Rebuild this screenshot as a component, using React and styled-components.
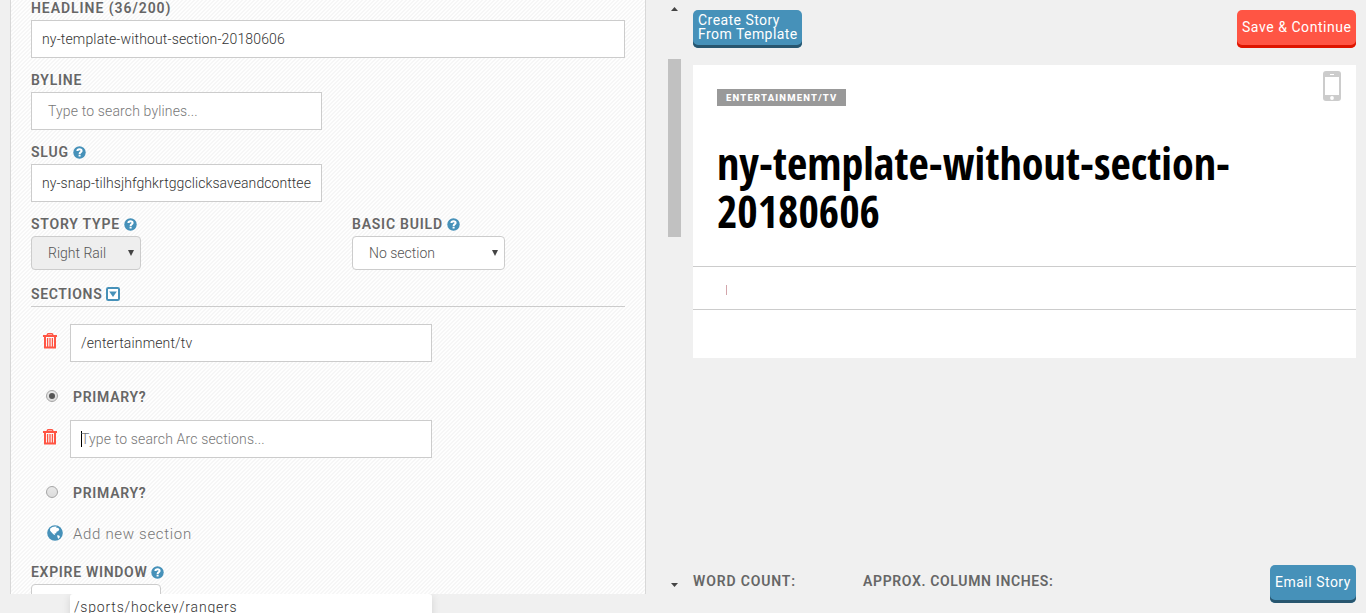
import React from 'react';
import styled, { createGlobalStyle } from 'styled-components';

const GlobalStyle = createGlobalStyle`
  * { box-sizing: border-box; }
  html, body { margin: 0; padding: 0; }
  body {
    background: #f0f0f0;
    color: #666;
    font-family: Roboto, "Liberation Sans", sans-serif;
    font-size: 14px;
    overflow: hidden;
  }
  svg { display: block; flex: none; }
`;

const Page = styled.div`
  position: relative;
  display: flex;
  width: 1366px;
  height: 613px;
  overflow: hidden;
  padding-left: 10px;
`;

const FormPane = styled.section`
  width: 636px;
  height: 594px;
  overflow: hidden;
  padding: 0 20px;
  border: solid #d8d8d8;
  border-width: 0 1px;
  background: linear-gradient(135deg, #fefefe 25%, #f6f6f6 25% 50%, #fefefe 50% 75%, #f6f6f6 75%) 0 0 / 4px 4px;
`;

const Label = styled.div`
  display: flex;
  align-items: center;
  gap: 4px;
  height: ${(p) => p.$h || 24}px;
  margin-top: ${(p) => p.$mt || 0}px;
  margin-bottom: ${(p) => p.$mb || 0}px;
  font-size: 14px;
  font-weight: 600;
  line-height: 24px;
  letter-spacing: ${(p) => p.$ls ?? 0.78}px;
  color: #666;
  white-space: nowrap;
`;

const Input = styled.div`
  display: flex;
  align-items: center;
  width: ${(p) => p.$w}px;
  height: 38px;
  padding-left: ${(p) => p.$pad || 10}px;
  border: 1px solid #ccc;
  background: #fff;
  color: ${(p) => (p.$placeholder ? '#777' : '#333')};
  font-size: 14px;
  font-weight: 300;
  letter-spacing: ${(p) => p.$ls ?? 0.15}px;
  white-space: nowrap;
`;

const Columns = styled.div`
  display: grid;
  grid-template-columns: 321px 1fr;
`;

const Select = styled.div`
  display: flex;
  align-items: center;
  justify-content: space-between;
  width: ${(p) => p.$w}px;
  height: 34px;
  padding: 0 6px 0 16px;
  border: 1px solid #ccc;
  border-radius: 4px;
  background: ${(p) => (p.$disabled ? '#eee' : '#fff')};
  color: #555;
  font-weight: 300;
  letter-spacing: 0;
`;

const SectionsHeading = styled(Label)`
  border-bottom: 1px solid #ccc;
`;

const SectionRow = styled.div`
  display: flex;
  padding-left: 12px;
  margin-top: ${(p) => p.$mt}px;
`;

const TrashSlot = styled.div`
  width: 27px;
  padding-top: 9px;
`;

const PrimaryRow = styled.div`
  display: flex;
  align-items: center;
  gap: 15px;
  height: 24px;
  margin-top: ${(p) => p.$mt}px;
  padding-left: 15px;
  font-weight: 600;
  letter-spacing: 0.72px;
`;

const Radio = styled.span`
  display: flex;
  align-items: center;
  justify-content: center;
  width: 12px;
  height: 12px;
  margin-top: -2px;
  border: 1px solid #a5a5a5;
  border-radius: 50%;
  background: linear-gradient(#e8e8e8, #dcdcdc);
  &::after {
    content: '';
    width: 6px;
    height: 6px;
    border-radius: 50%;
    background: ${(p) => (p.$checked ? '#555' : 'transparent')};
  }
`;

const AddRow = styled.div`
  display: flex;
  align-items: center;
  gap: 10px;
  height: 24px;
  margin-top: 17px;
  padding-left: 16px;
  color: #777;
  font-size: 15px;
  font-weight: 300;
  letter-spacing: 0.68px;
  svg { margin-top: -3px; }
`;

const Caret = styled.span`
  width: 1px;
  height: 16px;
  margin-right: -1px;
  background: #000;
`;

const Suggestions = styled.div`
  position: absolute;
  top: 594px;
  left: 70px;
  width: 362px;
  height: 40px;
  padding: 4px 4px 0;
  border-radius: 3px;
  background: #fff;
  box-shadow: 0 2px 8px rgba(0, 0, 0, 0.12);
  color: #333;
  font-weight: 300;
  line-height: 18px;
  letter-spacing: 0.8px;
  clip-path: inset(0 -10px -10px -10px);
`;

const Scrollbar = styled.div`
  display: flex;
  flex-direction: column;
  align-items: center;
  width: 13px;
  height: 587px;
  margin: 0 12px 0 22px;
  padding-top: 7px;
`;

const Thumb = styled.div`
  width: 13px;
  height: 178px;
  margin: 48px 0 auto;
  background: #c1c1c1;
`;

const Preview = styled.main`
  display: flex;
  flex-direction: column;
  width: 663px;
  height: 613px;
  padding: 10px 0;
`;

const Bar = styled.div`
  display: flex;
  justify-content: space-between;
`;

const Button = styled.div`
  display: flex;
  align-items: center;
  width: ${(p) => p.$w}px;
  height: 38px;
  padding: 0 0 4px 5px;
  border-radius: 5px;
  background: ${(p) => (p.$danger ? '#ff5544' : '#4691b9')};
  box-shadow: inset 0 -3px 0 ${(p) => (p.$danger ? '#de1500' : '#28566f')};
  color: #fff;
  font-size: 14px;
  line-height: 14px;
  letter-spacing: ${(p) => p.$ls ?? 0.5}px;
  white-space: nowrap;
`;

const Article = styled.article`
  height: 293px;
  margin-top: 17px;
  background: #fff;
`;

const ArticleHead = styled.header`
  display: flex;
  justify-content: space-between;
  height: 202px;
  padding: 6px 15px 0 24px;
  border-bottom: 1px solid #ccc;
`;

const Tag = styled.span`
  display: inline-block;
  height: 17px;
  width: 129px;
  margin-top: 18px;
  padding-left: 9px;
  background: #999;
  color: #fff;
  font-size: 9.5px;
  font-weight: 800;
  line-height: 17px;
  letter-spacing: 1.2px;
  white-space: nowrap;
`;

const Headline = styled.h1`
  width: 560px;
  margin: 33px 0 0;
  color: #000;
  font-family: "Open Sans Condensed", "Open Sans", sans-serif;
  font-stretch: 75%;
  font-size: 44px;
  font-weight: 700;
  line-height: 48px;
`;

const Body = styled.div`
  height: 43px;
  padding: 18px 0 0 33px;
  border-bottom: 1px solid #ccc;
`;

const BodyCaret = styled.div`
  width: 1px;
  height: 10px;
  background: #d3a5ab;
`;

const Footer = styled.footer`
  display: flex;
  margin-top: auto;
`;

const Stat = styled.span`
  width: ${(p) => p.$w}px;
  padding-top: 8px;
  font-weight: 600;
  line-height: 16px;
  letter-spacing: ${(p) => p.$ls}px;
  white-space: nowrap;
`;

const Help = () => (
  <svg width="13" height="13" viewBox="0 0 13 13">
    <circle cx="6.5" cy="6.5" r="6.2" fill="#4691b9" />
    <path d="M4.4 5C4.4 2.6 8.6 2.7 8.6 4.9C8.6 6.2 6.6 6.1 6.6 7.9" fill="none" stroke="#fff" strokeWidth="2" />
    <rect x="5.6" y="8.7" width="2" height="1.8" fill="#fff" />
  </svg>
);

const Collapse = () => (
  <svg width="14" height="14" viewBox="0 0 14 14">
    <rect x="1" y="1" width="12" height="12" rx="1.3" fill="#fff" stroke="#4691b9" strokeWidth="2" />
    <path d="M3.2 4.6H10.8L7 10Z" fill="#4691b9" />
  </svg>
);

const Trash = () => (
  <svg width="14" height="16" viewBox="0 0 14 16" fill="none" stroke="#ff5544">
    <path d="M0 3H14" strokeWidth="2" />
    <path d="M4.3 2.8V1.5Q4.3 .7 5.1 .7H8.9Q9.7 .7 9.7 1.5V2.8" strokeWidth="1.4" />
    <path d="M2 3V14.4H12V3" strokeWidth="2" />
    <path d="M4.6 5V14M7 5V14M9.4 5V14" strokeWidth="1.3" />
  </svg>
);

const Globe = () => (
  <svg width="16" height="16" viewBox="0 0 16 16">
    <circle cx="8" cy="8" r="7.8" fill="#4691b9" />
    <path d="M3.2 3.6L5.4 2L8.2 1.4L10 1.8L9 3L11 2.7L12.3 4.2L11.4 6L9.5 6.7L9.2 8.2L7.5 8.5L8.3 10.3L6.3 9.3L4.2 7.1L3 5.4Z M10 10.2L12.2 10.5L13 12L11.2 14L10.5 12.1Z" fill="#fff" />
  </svg>
);

const Phone = () => (
  <svg width="18" height="30" viewBox="0 0 18 30">
    <rect width="18" height="30" rx="3" fill="#ccc" />
    <rect x="2" y="6" width="14" height="18" fill="#fff" />
    <rect x="7" y="3" width="4" height="1" fill="#fff" />
    <circle cx="9" cy="27" r="1.9" fill="#fff" />
  </svg>
);

const Arrow = ({ w = 7, h = 4, up }) => (
  <svg width={w} height={h} viewBox="0 0 7 7" preserveAspectRatio="none">
    <path d={up ? 'M0 7L3.5 0L7 7Z' : 'M0 0H7L3.5 7Z'} fill="#444" />
  </svg>
);

export default function App() {
  return (
    <Page>
      <GlobalStyle />
      <FormPane>
        <Label $h={16} $mb={4} $ls={0.95}>HEADLINE (36/200)</Label>
        <Input $w={594}>ny-template-without-section-20180606</Input>
        <Label $mt={10}>BYLINE</Label>
        <Input $w={291} $pad={16} $placeholder>Type to search bylines...</Input>
        <Label $mt={10}>SLUG<Help /></Label>
        <Input $w={291} $ls={0.07}>ny-snap-tilhsjhfghkrtggclicksaveandconttee</Input>
        <Columns>
          <div>
            <Label $mt={10}>STORY TYPE<Help /></Label>
            <Select $w={110} $disabled>Right Rail<Arrow w={6} h={6} /></Select>
          </div>
          <div>
            <Label $mt={10}>BASIC BUILD<Help /></Label>
            <Select $w={153}>No section<Arrow w={6} h={6} /></Select>
          </div>
        </Columns>
        <SectionsHeading $h={26} $mt={11} $ls={0.65}>SECTIONS<Collapse /></SectionsHeading>
        <SectionRow $mt={17}>
          <TrashSlot><Trash /></TrashSlot>
          <Input $w={362}>/entertainment/tv</Input>
        </SectionRow>
        <PrimaryRow $mt={23}><Radio $checked />PRIMARY?</PrimaryRow>
        <SectionRow $mt={11}>
          <TrashSlot><Trash /></TrashSlot>
          <Input $w={362} $placeholder><Caret />Type to search Arc sections...</Input>
        </SectionRow>
        <PrimaryRow $mt={23}><Radio />PRIMARY?</PrimaryRow>
        <AddRow><Globe />Add new section</AddRow>
        <Label $mt={14} $ls={0.7}>EXPIRE WINDOW<Help /></Label>
        <Select $w={130} />
      </FormPane>
      <Scrollbar>
        <Arrow up />
        <Thumb />
        <Arrow />
      </Scrollbar>
      <Preview>
        <Bar>
          <Button $w={109} $ls={0.45}><span>Create Story<br />From Template</span></Button>
          <Button $w={119} $ls={0.55} $danger>Save &amp; Continue</Button>
        </Bar>
        <Article>
          <ArticleHead>
            <div>
              <Tag>ENTERTAINMENT/TV</Tag>
              <Headline>ny-template-without-section-20180606</Headline>
            </div>
            <Phone />
          </ArticleHead>
          <Body><BodyCaret /></Body>
        </Article>
        <Footer>
          <Stat $w={170} $ls={0.85}>WORD COUNT:</Stat>
          <Stat $w={407} $ls={0.65}>APPROX. COLUMN INCHES:</Stat>
          <Button $w={86}>Email Story</Button>
        </Footer>
      </Preview>
      <Suggestions>/sports/hockey/rangers</Suggestions>
    </Page>
  );
}
